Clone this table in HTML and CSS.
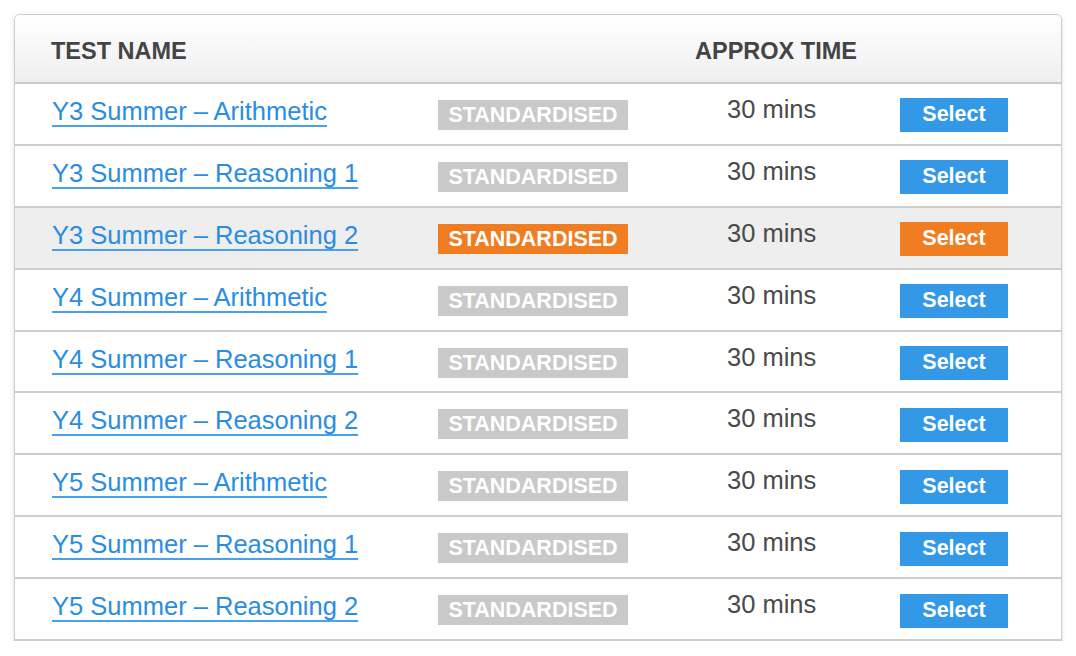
FILE: index.html
```html
<!DOCTYPE html>
<html lang="en">
<head>
<meta charset="utf-8">
<title>Tests</title>
<link rel="stylesheet" href="styles.css">
</head>
<body>
<div class="card">
  <div class="head">
    <div class="h-name">TEST NAME</div>
    <div class="h-badge"></div>
    <div class="h-time">APPROX TIME</div>
  </div>
  <div class="row"><div class="c-name"><a href="#">Y3 Summer – Arithmetic</a></div><div class="c-badge"><span class="badge">STANDARDISED</span></div><div class="c-time">30 mins</div><div class="c-btn"><span class="btn">Select</span></div></div>
  <div class="row"><div class="c-name"><a href="#">Y3 Summer – Reasoning 1</a></div><div class="c-badge"><span class="badge">STANDARDISED</span></div><div class="c-time">30 mins</div><div class="c-btn"><span class="btn">Select</span></div></div>
  <div class="row active"><div class="c-name"><a href="#">Y3 Summer – Reasoning 2</a></div><div class="c-badge"><span class="badge">STANDARDISED</span></div><div class="c-time">30 mins</div><div class="c-btn"><span class="btn">Select</span></div></div>
  <div class="row"><div class="c-name"><a href="#">Y4 Summer – Arithmetic</a></div><div class="c-badge"><span class="badge">STANDARDISED</span></div><div class="c-time">30 mins</div><div class="c-btn"><span class="btn">Select</span></div></div>
  <div class="row"><div class="c-name"><a href="#">Y4 Summer – Reasoning 1</a></div><div class="c-badge"><span class="badge">STANDARDISED</span></div><div class="c-time">30 mins</div><div class="c-btn"><span class="btn">Select</span></div></div>
  <div class="row"><div class="c-name"><a href="#">Y4 Summer – Reasoning 2</a></div><div class="c-badge"><span class="badge">STANDARDISED</span></div><div class="c-time">30 mins</div><div class="c-btn"><span class="btn">Select</span></div></div>
  <div class="row"><div class="c-name"><a href="#">Y5 Summer – Arithmetic</a></div><div class="c-badge"><span class="badge">STANDARDISED</span></div><div class="c-time">30 mins</div><div class="c-btn"><span class="btn">Select</span></div></div>
  <div class="row"><div class="c-name"><a href="#">Y5 Summer – Reasoning 1</a></div><div class="c-badge"><span class="badge">STANDARDISED</span></div><div class="c-time">30 mins</div><div class="c-btn"><span class="btn">Select</span></div></div>
  <div class="row"><div class="c-name"><a href="#">Y5 Summer – Reasoning 2</a></div><div class="c-badge"><span class="badge">STANDARDISED</span></div><div class="c-time">30 mins</div><div class="c-btn"><span class="btn">Select</span></div></div>
</div>
</body>
</html>
```

FILE: styles.css
```css
html, body {
  margin: 0;
  padding: 0;
  background: #ffffff;
}
body {
  padding: 14px 0 0 14px;
  font-family: "Liberation Sans", Arial, sans-serif;
}
.card {
  width: 1046px;
  border: 1px solid #cccccc;
  border-bottom: 2px solid #cccccc;
  border-radius: 6px 6px 0 0;
  box-shadow: 0 1px 5px rgba(0, 0, 0, 0.12);
  overflow: hidden;
}
.head {
  display: flex;
  align-items: center;
  height: 67px;
  border-bottom: 2px solid #cccccc;
  background: linear-gradient(#ffffff, #efefef);
  color: #444444;
  font-weight: bold;
  font-size: 23.5px;
}
.h-name {
  width: 387px;
  padding-left: 36px;
  padding-top: 5px;
}
.h-badge {
  width: 190px;
}
.h-time {
  padding-left: 67px;
  padding-top: 5px;
}
.row {
  display: flex;
  align-items: center;
  height: 59.9px;
  border-bottom: 2px solid #cdcdcd;
}
.row:last-child {
  border-bottom: none;
}
.row.active {
  background: #eeeeee;
}
.c-name {
  width: 386px;
  padding-left: 37px;
  font-size: 25.5px;
  padding-bottom: 5px;
}
.c-name a {
  color: #2a8de2;
  text-decoration: underline;
  text-decoration-color: #4aa0ea;
  text-decoration-thickness: 2px;
  text-underline-offset: 5px;
  text-decoration-skip-ink: none;
}
.c-badge {
  width: 190px;
  padding-top: 2px;
}
.badge {
  display: block;
  width: 190px;
  height: 30px;
  line-height: 31px;
  text-align: center;
  background: #c9c9c9;
  color: #ffffff;
  font-weight: bold;
  font-size: 21.5px;
}
.active .badge {
  background: #f07d21;
}
.c-time {
  width: 173px;
  padding-left: 99px;
  font-size: 25.5px;
  color: #4a4a4a;
  padding-bottom: 9px;
}
.c-btn {
  padding-top: 3px;
}
.btn {
  display: block;
  width: 108px;
  height: 34px;
  line-height: 33px;
  text-align: center;
  background: #3399e6;
  color: #ffffff;
  font-weight: bold;
  font-size: 21.5px;
}
.active .btn {
  background: #f07d21;
}
```
